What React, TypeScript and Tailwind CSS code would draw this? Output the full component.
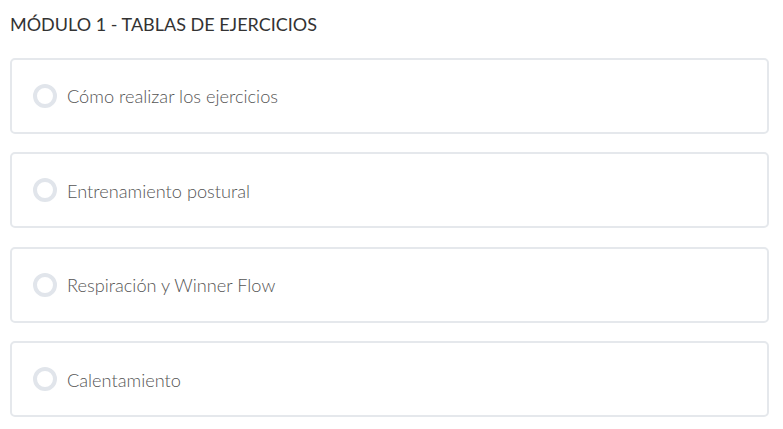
const lessons = [
  'Cómo realizar los ejercicios',
  'Entrenamiento postural',
  'Respiración y Winner Flow',
  'Calentamiento',
];

export default function App() {
  return (
    <div className="min-h-screen bg-white px-[10px] pt-[12px]" style={{ fontFamily: 'Lato, "Noto Sans", sans-serif' }}>
      <h2 className="text-[18px] leading-[24px] text-[#333] uppercase mb-[22px]">Módulo 1 - Tablas de ejercicios</h2>
      <div className="flex flex-col gap-[18.4px] w-[759px]">
        {lessons.map((title) => (
          <div key={title} className="flex items-center h-[76px] border-2 border-[#e5e8ec] rounded-[5px] px-[21px]">
            <span className="w-[24px] h-[24px] rounded-full border-4 border-[#e1e5eb] shrink-0" />
            <span className="ml-[10px] pt-[2px] text-[18.2px] font-light text-[#555]">{title}</span>
          </div>
        ))}
      </div>
    </div>
  );
}
